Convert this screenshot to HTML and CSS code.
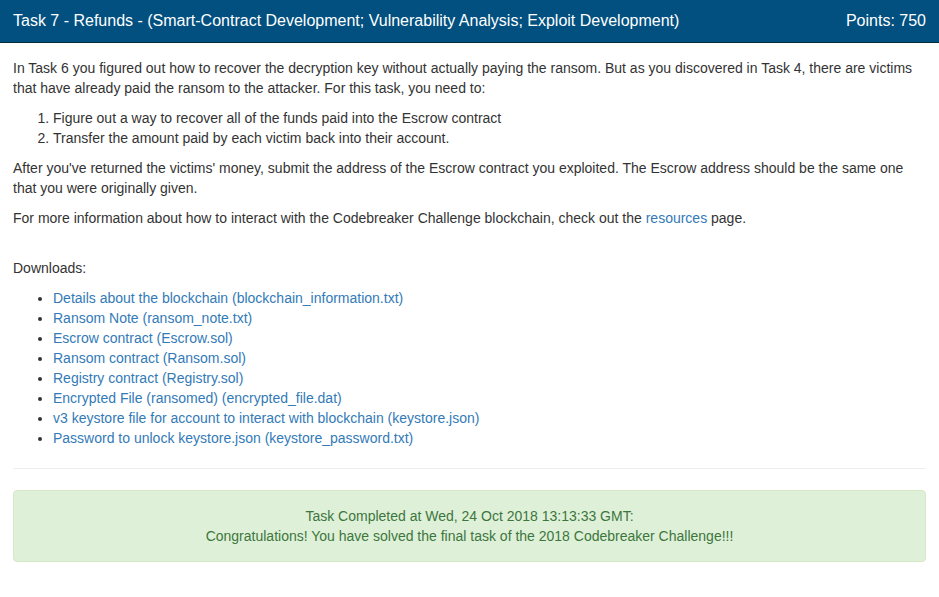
FILE: index.html
```html
<!DOCTYPE html>
<html>
<head>
<meta charset="utf-8">
<link rel="stylesheet" href="styles.css">
</head>
<body>
<div class="panel">
  <div class="panel-heading">
    <span class="title">Task 7 - Refunds - (Smart-Contract Development; Vulnerability Analysis; Exploit Development)</span>
    <span class="points">Points: 750</span>
  </div>
  <div class="panel-body">
    <p>In Task 6 you figured out how to recover the decryption key without actually paying the ransom. But as you discovered in Task 4, there are victims that have already paid the ransom to the attacker. For this task, you need to:</p>
    <ol>
      <li>Figure out a way to recover all of the funds paid into the Escrow contract</li>
      <li>Transfer the amount paid by each victim back into their account.</li>
    </ol>
    <p>After you've returned the victims' money, submit the address of the Escrow contract you exploited. The Escrow address should be the same one that you were originally given.</p>
    <p class="spaced">For more information about how to interact with the Codebreaker Challenge blockchain, check out the <a href="#">resources</a> page.</p>
    <p>Downloads:</p>
    <ul>
      <li><a href="#">Details about the blockchain (blockchain_information.txt)</a></li>
      <li><a href="#">Ransom Note (ransom_note.txt)</a></li>
      <li><a href="#">Escrow contract (Escrow.sol)</a></li>
      <li><a href="#">Ransom contract (Ransom.sol)</a></li>
      <li><a href="#">Registry contract (Registry.sol)</a></li>
      <li><a href="#">Encrypted File (ransomed) (encrypted_file.dat)</a></li>
      <li><a href="#">v3 keystore file for account to interact with blockchain (keystore.json)</a></li>
      <li><a href="#">Password to unlock keystore.json (keystore_password.txt)</a></li>
    </ul>
    <hr>
    <div class="alert">
      <div>Task Completed at Wed, 24 Oct 2018 13:13:33 GMT:</div>
      <div>Congratulations! You have solved the final task of the 2018 Codebreaker Challenge!!!</div>
    </div>
  </div>
</div>
</body>
</html>
```
FILE: styles.css
```css
html, body {
  margin: 0;
  padding: 0;
  background: #fff;
}
body {
  font-family: "Liberation Sans", Arial, sans-serif;
  font-size: 14px;
  line-height: 20px;
  color: #333;
}
.panel-heading {
  display: flex;
  justify-content: space-between;
  align-items: center;
  height: 43px;
  padding: 0 13px;
  box-sizing: border-box;
  background: #01507f;
  border-bottom: 1px solid #0a2a3a;
  color: #fff;
  font-size: 16px;
}
.panel-body {
  padding: 15px 13px;
}
p {
  margin: 0 0 10px;
}
p.spaced {
  margin-bottom: 30px;
}
ol, ul {
  margin: 0 0 10px;
  padding-left: 40px;
}
a {
  color: #337ab7;
  text-decoration: none;
}
hr {
  margin: 20px 0 21px;
  border: 0;
  border-top: 1px solid #eee;
}
.alert {
  padding: 15px;
  background: #dff0d8;
  border: 1px solid #d6e9c6;
  border-radius: 4px;
  color: #3c763d;
  text-align: center;
}
```
